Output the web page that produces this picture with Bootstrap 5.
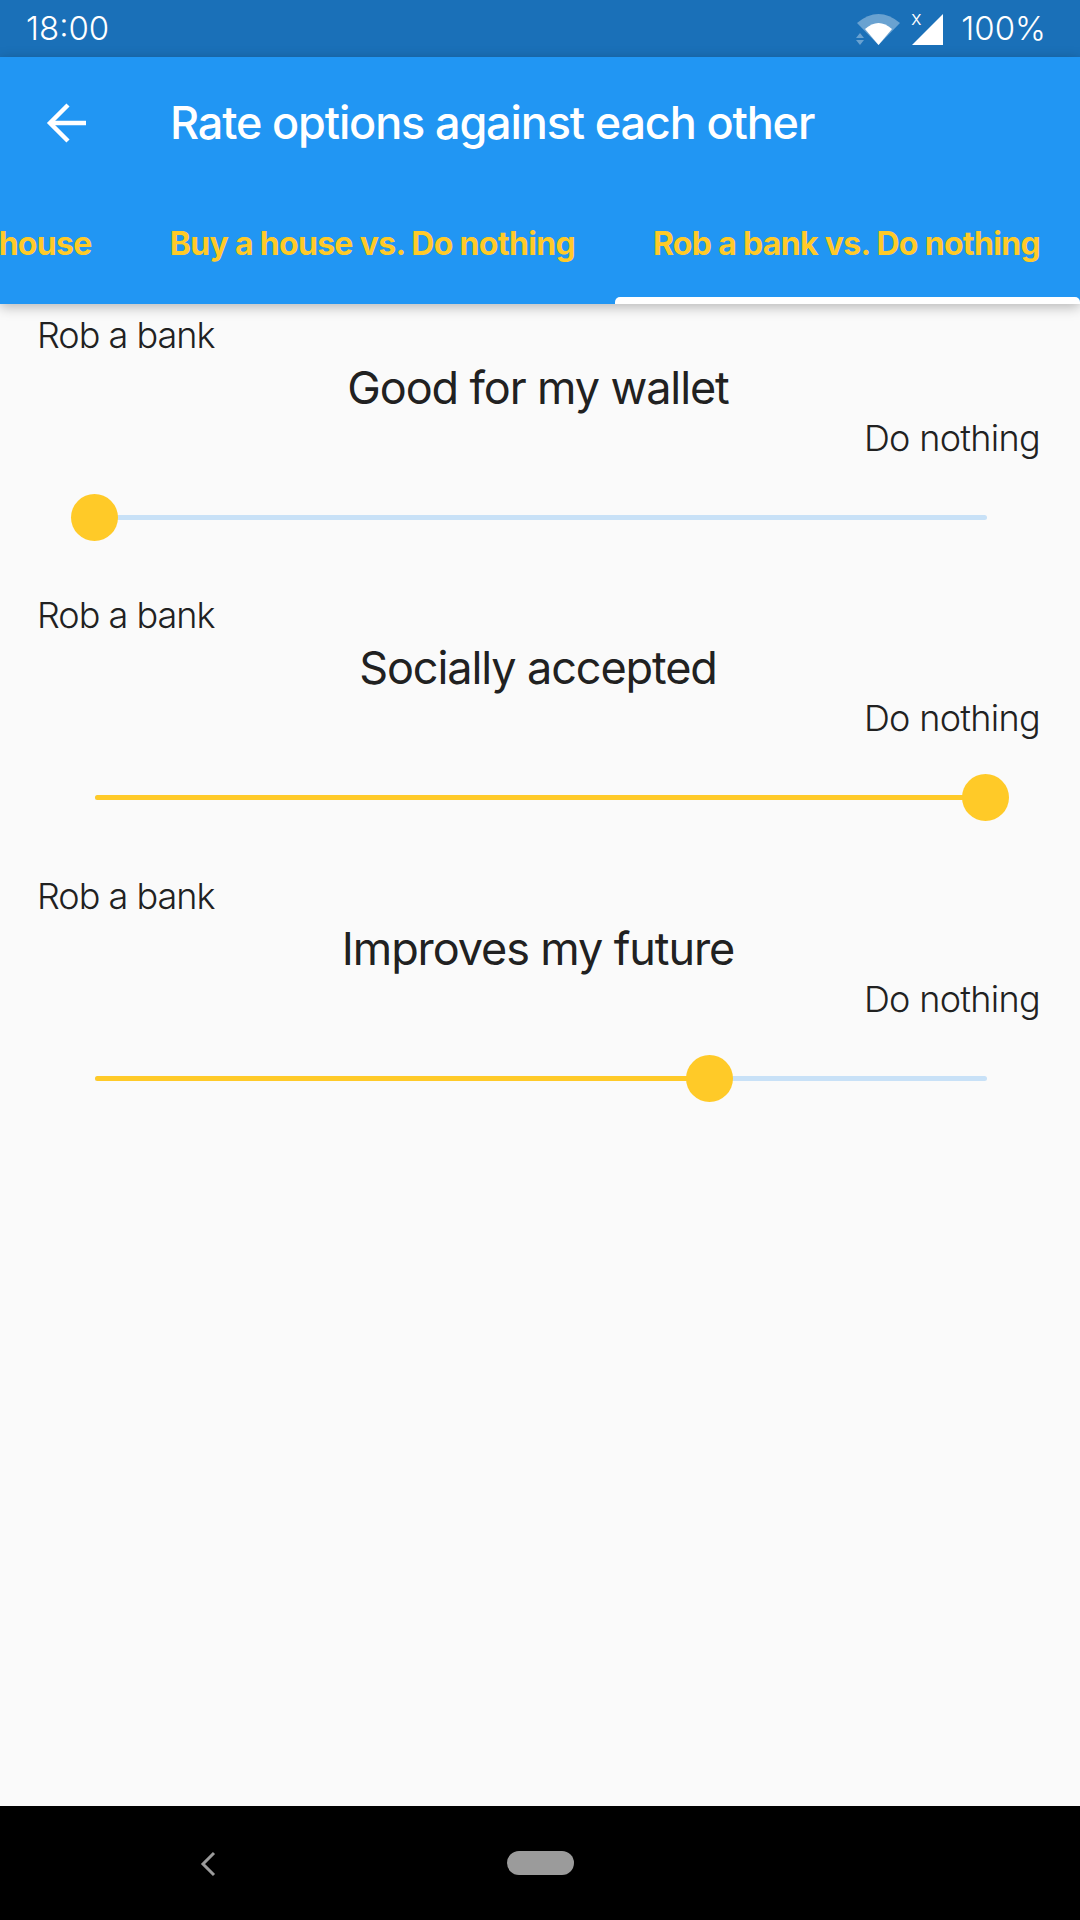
<!DOCTYPE html>
<html lang="en">
<head>
  <meta charset="UTF-8">
  <meta name="viewport" content="width=device-width, initial-scale=1.0">
  <title>Rate options against each other</title>
  <link href="https://cdn.jsdelivr.net/npm/bootstrap@5.3.0/dist/css/bootstrap.min.css" rel="stylesheet">
  <style>
    html, body { height: 100%; }
    body { width: 1080px; height: 1920px; background: #fafafa; color: #212121; font-family: Inter, "Noto Sans", sans-serif; overflow: hidden; }
    .status-bar { height: 57px; background: #1a70b8; color: #fff; padding: 0 34px 0 26px; font-size: 33px; font-weight: 300; line-height: 57px; }
    .app-head { height: 247px; background: #2196f3; box-shadow: 0 3px 12px rgba(0,0,0,.28); position: relative; z-index: 2; }
    .title-row { height: 132px; color: #fff; font-size: 45px; font-weight: 500; letter-spacing: -1.15px; }
    .back-btn { width: 170px; padding-left: 46px; }
    .tabs-row { height: 115px; overflow: hidden; color: #ffca28; font-size: 32px; font-weight: 700; letter-spacing: -.68px; white-space: nowrap; }
    .tab-item { position: relative; height: 115px; line-height: 109px; flex: none; padding: 0 40px 0 38px; }
    .tab-active::after { content: ""; position: absolute; left: 0; right: 0; bottom: 0; height: 7px; background: #fff; border-radius: 5px 5px 0 0; }
    .rate-block { height: 280.5px; padding: 5.8px 40px 0 37px; font-size: 36px; }
    .opt-line { line-height: 50px; font-weight: 300; letter-spacing: -1px; }
    .opt-right { letter-spacing: -.7px; }
    .crit-line { font-size: 45px; line-height: 51px; margin-top: 2px; letter-spacing: -1.1px; padding-right: 1px; }
    .track { height: 5px; background: #c8e1f7; margin: 52px 53px 0 58px; position: relative; border-radius: 3px; }
    .track-fill { height: 100%; background: #ffca28; border-radius: 3px; }
    .thumb { position: absolute; top: -21px; width: 47px; height: 47px; margin-left: -24px; border-radius: 50%; background: #ffca28; }
    .nav-bottom { height: 114px; background: #000; position: relative; }
    .nav-pill { width: 67px; height: 24px; background: #9b9b9b; border-radius: 12px; }
    .back-chevron { left: 198px; top: 44px; }
  </style>
</head>
<body class="d-flex flex-column">
  <div class="status-bar d-flex justify-content-between flex-shrink-0">
    <span>18:00</span>
    <span class="d-flex align-items-center">
      <svg width="94" height="57" viewBox="1 0 94 57">
        <path d="M7 23 Q28.5 5 50 23 L28.5 45Z" fill="#fff" opacity=".35"/>
        <path d="M15 29 Q28.5 17 42 29 L28.5 45Z" fill="#fff"/>
        <path d="M10 33 L14 38 L6 38Z M6 40 L14 40 L10 45Z" fill="#fff" opacity=".35"/>
        <path d="M93 14 V45 H62Z" fill="#fff"/>
        <text x="61" y="25" fill="#fff" font-size="20" font-family="Inter, sans-serif">x</text>
      </svg>
      <span class="ms-3">100%</span>
    </span>
  </div>

  <header class="app-head flex-shrink-0">
    <div class="title-row d-flex align-items-center">
      <div class="back-btn d-flex">
        <svg width="40" height="40" viewBox="0 0 40 40" fill="none" stroke="#fff" stroke-width="4.4">
          <path d="M41 20 H4"/><path d="M22 2 L4 20 L22 38"/>
        </svg>
      </div>
      <span>Rate options against each other</span>
    </div>
    <div class="tabs-row d-flex justify-content-end">
      <div class="tab-item">house</div>
      <div class="tab-item">Buy a house vs. Do nothing</div>
      <div class="tab-item tab-active">Rob a bank vs. Do nothing</div>
    </div>
  </header>

  <main class="flex-grow-1">
    <section class="rate-block">
      <div class="opt-line">Rob a bank</div>
      <div class="crit-line text-center">Good for my wallet</div>
      <div class="opt-line opt-right text-end">Do nothing</div>
      <div class="track"><div class="track-fill" style="width:0%"></div><div class="thumb" style="left:0%"></div></div>
    </section>
    <section class="rate-block">
      <div class="opt-line">Rob a bank</div>
      <div class="crit-line text-center">Socially accepted</div>
      <div class="opt-line opt-right text-end">Do nothing</div>
      <div class="track"><div class="track-fill" style="width:100%"></div><div class="thumb" style="left:99.9%"></div></div>
    </section>
    <section class="rate-block">
      <div class="opt-line">Rob a bank</div>
      <div class="crit-line text-center">Improves my future</div>
      <div class="opt-line opt-right text-end">Do nothing</div>
      <div class="track"><div class="track-fill" style="width:69%"></div><div class="thumb" style="left:69%"></div></div>
    </section>
  </main>

  <footer class="nav-bottom flex-shrink-0 d-flex align-items-center justify-content-center">
    <svg class="position-absolute back-chevron" width="20" height="28" viewBox="0 0 20 28" fill="none" stroke="#9b9b9b" stroke-width="3">
      <path d="M16 3 L5 14 L16 25"/>
    </svg>
    <div class="nav-pill"></div>
  </footer>
</body>
</html>
